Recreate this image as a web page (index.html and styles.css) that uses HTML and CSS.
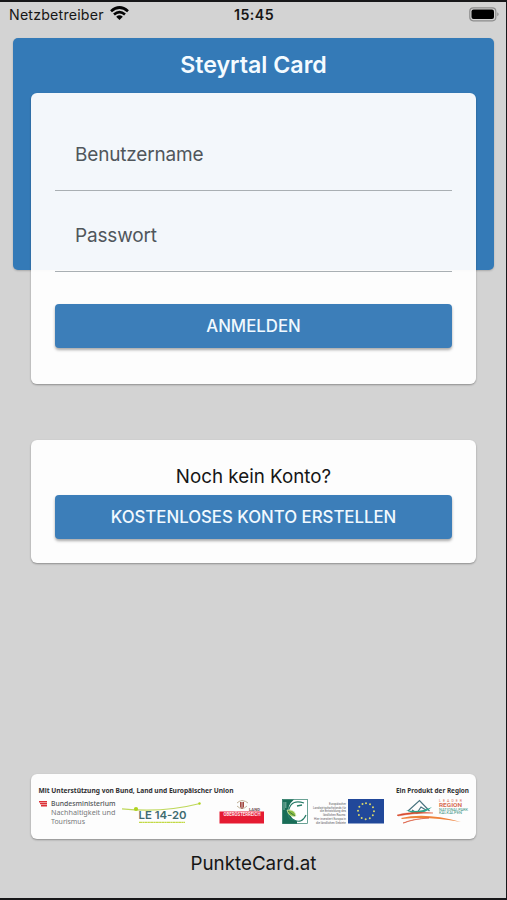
FILE: index.html
```html
<!DOCTYPE html>
<html lang="de">
<head>
<meta charset="utf-8">
<title>Steyrtal Card</title>
<link rel="stylesheet" href="styles.css">
</head>
<body>
<div class="screen">
  <header class="status">
    <div class="carrier"><span>Netzbetreiber</span>
      <svg width="19" height="15" viewBox="0 0 19 15"><g fill="none" stroke="#050505" stroke-width="2.7"><path d="M1 5.2Q9.500-2.200 18 5.200"/><path d="M4 8.500Q9.500 3.800 15 8.500"/></g><path d="M6.200 10.700Q9.500 8 12.800 10.700L9.500 14Z" fill="#050505"/></svg>
    </div>
    <time class="clock">15:45</time>
    <svg class="battery" width="31" height="15" viewBox="0 0 31 15"><rect x=".8" y=".8" width="26" height="13" rx="3.500" fill="none" stroke="#8c8c8c" stroke-width="1.200"/><rect x="2.500" y="2.500" width="22.500" height="9.600" rx="2" fill="#000"/><path d="M28.300 5.300Q31 7.300 28.300 9.300Z" fill="#8c8c8c"/></svg>
  </header>

  <main>
    <section class="hero">
      <h1>Steyrtal Card</h1>
      <form class="card login">
        <div class="field"><span class="user">Benutzername</span></div>
        <div class="field"><span class="pass">Passwort</span></div>
        <button type="button" class="btn"><span class="signin">ANMELDEN</span></button>
      </form>
    </section>

    <section class="card register">
      <p>Noch kein Konto?</p>
      <button type="button" class="btn"><span class="create">KOSTENLOSES KONTO ERSTELLEN</span></button>
    </section>
  </main>

  <footer>
    <div class="card sponsors">
      <svg width="444" height="65" viewBox="31 774 444 65">
        <g class="caption"><text x="38.500" y="793" textLength="195" lengthAdjust="spacingAndGlyphs">Mit Unterstützung von Bund, Land und Europäischer Union</text>
        <text x="396" y="793" textLength="73" lengthAdjust="spacingAndGlyphs">Ein Produkt der Region</text></g>

        <path d="M39 801h8v1.600h-8zM40 803h7v1.200h-7zM41 804.800h6v1.700h-6z" fill="#dc2f35"/>
        <g class="ministry"><text class="strong" x="51" y="806.300" textLength="64.500" lengthAdjust="spacingAndGlyphs">Bundesministerium</text>
        <text x="51" y="815" textLength="64.500" lengthAdjust="spacingAndGlyphs">Nachhaltigkeit und</text>
        <text x="51" y="823.500" textLength="34" lengthAdjust="spacingAndGlyphs">Tourismus</text></g>

        <path d="M122 808.800Q163 813 200 803.500" fill="none" stroke="#bfd85c" stroke-width="1.200"/>
        <circle cx="136" cy="809" r="2.100" fill="#afd31e"/><circle cx="199.500" cy="803.500" r="1.200" fill="#afd31e"/>
        <text class="le" x="138.500" y="819" textLength="48" lengthAdjust="spacingAndGlyphs">LE 14-20</text>
        <path d="M139 822.300h46" stroke="#c2d944" stroke-width="1.300" stroke-dasharray="3 .3 2 .3"/>

        <rect x="219.500" y="811.500" width="44.500" height="12" fill="#e51b32"/>
        <text class="upper" x="223.500" y="816" textLength="37" lengthAdjust="spacingAndGlyphs">OBERÖSTERREICH</text>
        <text class="land" x="249" y="811" textLength="11" lengthAdjust="spacingAndGlyphs">LAND</text>
        <path d="M237 803q2-2 5-2.500q4 .5 6 2.500M237 806q5 5 10 0" fill="none" stroke="#b7a68a" stroke-width=".9"/><path d="M240 802h4v5l-2 2-2-2z" fill="#a34942"/><path d="M242 802v6" stroke="#eee" stroke-width=".7"/>

        <rect x="282.500" y="799.500" width="25" height="24" fill="#fff" stroke="#2d7b68" stroke-width=".7"/><path d="M282.500 799.500h11.500q-7 6-5 12 2 8 8 9.500v2.800h-14.500z" fill="#196d57"/>
        <path d="M304 803q-12-4-15 6t5 11q8 4 12-5" fill="none" stroke="#287c68" stroke-width="1.200"/><path d="M287 810q8-1 9 6-7 2-9-6" fill="#8bbd42" stroke="#d8e9b8" stroke-width=".7"/><path d="M288 811l7 5" stroke="#255f41" stroke-width=".7"/><path d="M284 802v8m1.800-8v6" stroke="#cae6dc" stroke-width=".6"/><path d="M297 806l5-1" stroke="#287c68" stroke-width="1.500"/>

        <g class="fund" text-anchor="end"><text x="346" y="804.500" textLength="17" lengthAdjust="spacingAndGlyphs">Europäischer</text>
        <text x="346" y="808.500" textLength="33" lengthAdjust="spacingAndGlyphs">Landwirtschaftsfonds für</text>
        <text x="346" y="812.300" textLength="26" lengthAdjust="spacingAndGlyphs">die Entwicklung des</text>
        <text x="346" y="816" textLength="23" lengthAdjust="spacingAndGlyphs">ländlichen Raums:</text>
        <text x="346" y="819.800" textLength="32" lengthAdjust="spacingAndGlyphs">Hier investiert Europa in</text>
        <text x="346" y="823.500" textLength="30" lengthAdjust="spacingAndGlyphs">die ländlichen Gebiete</text></g>

        <rect x="348" y="799" width="36" height="24.500" fill="#21489a"/>
        <path d="M366 803.200a8 8 0 1 1-.01 0" fill="none" stroke="#d9d76a" stroke-width="2" stroke-linecap="round" stroke-dasharray="0 4.189"/>

        <path d="M408 811l11.500-10.500 10 10.500M412 810l5 3 4-6 5 3" fill="none" stroke="#48737f" stroke-width="1.200"/>
        <path d="M406 810q13 3 26-3-8 8-20 6z" fill="#2ea58f"/>
        <path d="M397 815q14-4 36-2-20 0-35 3z" fill="#d94d2e" stroke="#d94d2e" stroke-width=".4"/><path d="M401 818q25-6 60 4-33-6-59-3z" fill="#ef823b"/><path d="M403 823q9-4 26-5-16 1-25 5z" fill="#d94d2e" stroke="#d94d2e" stroke-width=".5"/>
        <g class="leader"><text x="439" y="802" textLength="23" lengthAdjust="spacing">LEADER</text><text class="region" x="439" y="807.300" textLength="23" lengthAdjust="spacingAndGlyphs">REGION</text><text class="green" x="439" y="810.800" textLength="29" lengthAdjust="spacingAndGlyphs">NATIONALPARK</text><text class="green" x="439" y="814.300" textLength="23" lengthAdjust="spacingAndGlyphs">KALKALPEN</text></g>
      </svg>
    </div>
    <p class="site">PunkteCard.at</p>
  </footer>
</div>
</body>
</html>
```

FILE: styles.css
```css
* { box-sizing: border-box; }

body {
  margin: 0;
  font-family: Inter, "Liberation Sans", sans-serif;
  color: #161616;
}

.screen {
  display: flex;
  flex-direction: column;
  height: 900px;
  background: #d3d3d3;
  border: solid #171719;
  border-width: 2px 1px 2px 0;
  overflow: hidden;
}

h1, p { margin: 0; }
svg { display: block; }

.status {
  display: grid;
  grid-template-columns: 1fr auto 1fr;
  align-items: center;
  height: 24px;
  padding: 0 7px 0 9px;
  font-size: 14.2px;
}

.carrier { display: flex; align-items: center; gap: 6px; }
.carrier span { letter-spacing: .2px; }
.carrier svg { margin-top: -1px; }
.clock { font-weight: 600; letter-spacing: .45px; }
.battery { justify-self: end; margin-right: -1px; }

main { padding: 12px 12px 0 13px; }

.hero {
  height: 232px;
  padding: 0 18px;
  background: #347ab7;
  border-radius: 5px;
  box-shadow: 0 1px 2px #0003;
}

h1 {
  height: 55px;
  color: #f4fbff;
  font-size: 23.2px;
  font-weight: 600;
  line-height: 55px;
  text-align: center;
}

.card {
  background: #fdfdfd;
  border-radius: 6px;
  box-shadow: 0 1px 2px #0005;
}

.login {
  height: 291px;
  padding: 17px 24px 0;
  background: #fffffff0;
}

.field {
  height: 81px;
  padding-left: 20px;
  border-bottom: 1px solid #a9afb3;
  color: #50565b;
  font-size: 19px;
  letter-spacing: -.18px;
  line-height: 89px;
}

.btn {
  display: block;
  width: 100%;
  height: 44px;
  padding: 0;
  border: 0;
  border-radius: 4px;
  background: #3c7eb9;
  box-shadow: 0 2px 3px #0005;
  color: #f1f9ff;
  font: 500 16.8px/44px Inter, "Liberation Sans", sans-serif;
}

.login .btn { margin-top: 32px; }

.register {
  height: 123px;
  margin: 170px 18px 0;
  padding: 18px 24px 0;
}

.register p {
  height: 37px;
  font-size: 18.8px;
  line-height: 37px;
  text-align: center;
}

.register .btn { line-height: 45px; }

footer { margin-top: auto; padding: 0 30px 0 31px; }
.sponsors { height: 65px; overflow: hidden; }

.site {
  height: 59px;
  font-size: 18.8px;
  line-height: 49px;
  text-align: center;
}

.caption { font: 700 6.8px "Noto Sans", sans-serif; fill: #303032; }
.ministry { font: 400 7.2px "Noto Sans", sans-serif; fill: #77797b; }
.ministry .strong { font-weight: 500; fill: #515457; }
.le { font: 600 10.800px Inter, sans-serif; fill: #406b70; }
.upper { font: 700 4.500px Roboto, sans-serif; fill: #ffe5e9; }
.land { font: 700 3.500px Roboto, sans-serif; fill: #6c5055; }
.fund { font: 400 3.400px Roboto, sans-serif; fill: #5a5a5d; }
.leader { font: 400 3.5px Roboto, sans-serif; fill: #d76c53; }
.leader .region { font-size: 5px; font-weight: 700; }
.leader .green { font-size: 3px; fill: #36917e; }
```
